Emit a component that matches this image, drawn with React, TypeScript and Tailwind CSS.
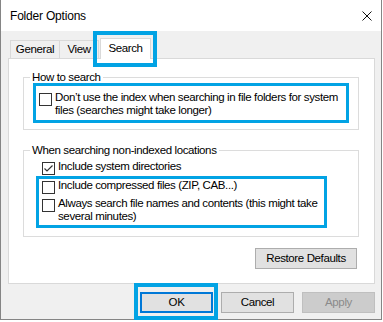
const Box = ({ checked = false }: { checked?: boolean }) => (
  <span className="mt-[2px] w-[13px] h-[13px] shrink-0 border border-[#333333] bg-white flex items-center justify-center">
    {checked && (
      <svg width="11" height="11" viewBox="0 0 11 11">
        <path d="M1.5 5.5 L4 8 L9.5 2.5" fill="none" stroke="#333" strokeWidth="1.2" />
      </svg>
    )}
  </span>
)

const Row = ({ checked = false, children }: { checked?: boolean; children: React.ReactNode }) => (
  <div className="flex items-start gap-[3px]">
    <Box checked={checked} />
    <span className="leading-[13px] whitespace-nowrap">{children}</span>
  </div>
)

const App = () => {
  return (
    <div className="font-['Liberation_Sans',Arial,sans-serif] text-[11.5px] tracking-[-0.38px] text-black bg-white w-[383px] h-[322px]">
      <div className="relative w-[382px] h-[320px] border-x border-b border-[#858585] flex flex-col">
        {/* title bar */}
        <div className="h-[31px] bg-white flex items-center justify-between pl-[9px] pr-[9px]">
          <span className="leading-[14px] text-[12px] tracking-[-0.2px]">Folder Options</span>
          <svg width="10" height="10" viewBox="0 0 10 10">
            <path d="M0.5 0.5 L9.5 9.5 M9.5 0.5 L0.5 9.5" stroke="#111" strokeWidth="1" />
          </svg>
        </div>

        <div className="flex-1 bg-[#f0f0f0] flex flex-col">
          {/* tabs */}
          <div className="h-[27px] flex items-end pl-[9px]">
            <div className="w-[49px] h-[18px] border-t border-l border-[#d9d9d9] flex items-center justify-center leading-[13px] whitespace-nowrap">General</div>
            <div className="w-[40px] h-[18px] border-t border-x border-[#d9d9d9] flex items-center justify-center leading-[13px]">View</div>
            <div className="relative z-10 ml-[1px] w-[51px] h-[21px] -mb-[1px] border-t border-x border-[#d9d9d9] bg-white flex justify-center pt-[3px] leading-[13px]">Search</div>
          </div>

          {/* panel */}
          <div className="ml-[7px] w-[367px] h-[226px] border border-[#d9d9d9] bg-white flex flex-col">
            <fieldset className="mt-[11px] ml-[14px] w-[336px] border border-[#dcdcdc] pl-[6px] pb-[6px]">
              <legend className="px-[2px] leading-[14px]">How to search</legend>
              <div className="-mt-[1px] ml-[3px] w-[316px] h-[40px] border-[3px] border-[#02a3e4] pl-[3px] pt-[5px]">
                <Row>
                  Don’t use the index when searching in file folders for system
                  <br />
                  files (searches might take longer)
                </Row>
              </div>
            </fieldset>

            <fieldset className="mt-[13px] ml-[14px] w-[336px] border border-[#dcdcdc] pl-[6px] pb-[8px]">
              <legend className="px-[2px] leading-[14px]">When searching non-indexed locations</legend>
              <div className="mt-[3px] ml-[12px]">
                <Row checked>Include system directories</Row>
              </div>
              <div className="mt-[1px] ml-[6px] w-[291px] border-[3px] border-[#02a3e4] pl-[3px] pb-[2px] flex flex-col gap-[3px]">
                <Row>Include compressed files (ZIP, CAB...)</Row>
                <Row>
                  Always search file names and contents (this might take
                  <br />
                  several minutes)
                </Row>
              </div>
            </fieldset>

            <div className="mt-[11px] ml-[14px] w-[336px] flex justify-end pr-[2px]">
              <button className="w-[102px] h-[21px] bg-[#e1e1e1] border border-[#adadad] leading-[13px]">Restore Defaults</button>
            </div>
          </div>

          {/* dialog buttons */}
          <div className="mt-[8px] ml-[7px] w-[367px] flex justify-end gap-[8px]">
            <div className="relative">
              <button className="w-[73px] h-[21px] bg-[#e1e1e1] border-2 border-[#0078d7] leading-[13px]">OK</button>
              <div className="absolute -left-[6px] -top-[9px] w-[84px] h-[37px] border-[4px] border-[#02a3e4]" />
            </div>
            <button className="w-[73px] h-[21px] bg-[#e1e1e1] border border-[#adadad] leading-[13px]">Cancel</button>
            <button className="w-[73px] h-[21px] bg-[#cccccc] border border-[#bfbfbf] text-[#8a8a8a] leading-[13px]">Apply</button>
          </div>
        </div>

        {/* highlight around Search tab */}
        <div className="absolute left-[92px] top-[31px] w-[64px] h-[36px] border-[4px] border-[#02a3e4] z-20" />
      </div>
    </div>
  )
}

export default App
